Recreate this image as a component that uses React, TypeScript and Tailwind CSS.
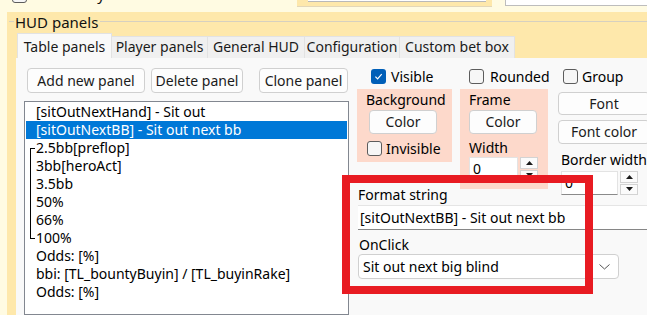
import React from "react";

const CheckBox = ({ checked = false }: { checked?: boolean }) => {
    if (checked) {
        return (
            <span className="w-[15px] h-[15px] rounded-[3px] bg-[#005fb8] flex items-center justify-center shrink-0">
                <svg width="11" height="11" viewBox="0 0 11 11">
                    <path d="M2.4 5.7 L4.6 7.9 L8.7 3.2" fill="none" stroke="#ffffff" strokeWidth="1.2" />
                </svg>
            </span>
        );
    }
    return <span className="w-[15px] h-[15px] rounded-[3px] border border-[#5c5c5c] bg-[#f6f6f6] shrink-0" />;
};

const Btn = ({ children, className = "" }: { children: React.ReactNode; className?: string }) => (
    <div className={"bg-[#fdfdfd] border border-[#d0d0d0] rounded-[4px] flex items-center justify-center text-[14px] text-[#1b1b1b] shrink-0 " + className}>
        {children}
    </div>
);

const Spin = ({ inputW }: { inputW: string }) => (
    <div className="flex gap-[2px] h-[24px]">
        <div className={inputW + " bg-white border border-[#e3e3e3] border-b-[#8a8a8a] text-[14px] leading-[22px] pl-[3px]"}>0</div>
        <div className="w-[18px] flex flex-col gap-[1px]">
            <div className="flex-1 bg-[#fbfbfb] border border-[#d3d3d3] flex items-center justify-center">
                <svg width="7" height="4" viewBox="0 0 7 4"><path d="M0 4 L3.5 0 L7 4 Z" fill="#1a1a1a" /></svg>
            </div>
            <div className="flex-1 bg-[#fbfbfb] border border-[#d3d3d3] flex items-center justify-center">
                <svg width="7" height="4" viewBox="0 0 7 4"><path d="M0 0 L3.5 4 L7 0 Z" fill="#1a1a1a" /></svg>
            </div>
        </div>
    </div>
);

const tabs = ["Player panels", "General HUD", "Configuration", "Custom bet box"];
const tabW = ["w-[96px]", "w-[97px]", "w-[95px]", "w-[115px]"];

const App = () => {
    return (
        <div className="w-[647px] h-[315px] overflow-hidden bg-[#fffbe2] font-['Noto_Sans',sans-serif] text-[#111] relative">
            {/* cut off row above */}
            <div className="h-[12px] flex items-start overflow-hidden">
                <div className="w-[297px] flex items-start">
                    <span className="ml-[12px] mt-[-12px] w-[15px] h-[15px] rounded-[3px] border border-[#5c5c5c] bg-[#f6f6f6]" />
                    <span className="ml-[4px] mt-[-15px] text-[15px] leading-[18px]">OnClick by mouse down</span>
                </div>
                <div className="w-[195px] h-[7px] bg-[#fee8ab] border-b border-[#e3d7b8] pl-[11px] pr-[6px]">
                    <div className="h-[2px] bg-white border-b border-[#b9b9b9]" />
                </div>
                <div className="ml-[13px] flex-1 h-[6px] bg-white border-l border-b border-[#bdbdbd]" />
            </div>

            {/* HUD panels group */}
            <div className="ml-[7px] h-[303px] bg-[#fee8ab] flex flex-col">
                <div className="h-[21px] flex items-start shrink-0">
                    <div className="ml-[2px] w-[5px] mt-[9px] border-t border-[#d6d0c0]" />
                    <div className="pl-[1px] pr-[2px] mt-[1px] text-[15px] leading-[18px]">HUD panels</div>
                    <div className="flex-1 mt-[9px] border-t border-[#d6d0c0]" />
                </div>

                <div className="ml-[10px] h-[25px] flex items-end shrink-0 text-[14px] text-[#1a1a1a]">
                    <div className="w-[95px] h-[25px] bg-[#f9f9f9] border border-b-0 border-[#e2e2e2] pt-[4px] text-center leading-[18px]">Table panels</div>
                    {tabs.map((t, i) => (
                        <div key={t} className={tabW[i] + " h-[22px] bg-[#f0f0f0] border border-l-0 border-b-0 border-[#e2e2e2] text-center leading-[20px]"}>{t}</div>
                    ))}
                </div>

                <div className="ml-[9px] flex-1 bg-[#f9f9f9] flex">
                    {/* left column */}
                    <div className="pl-[8px] w-[333px] flex flex-col shrink-0">
                        <div className="mt-[10px] pl-[3px] flex">
                            <Btn className="w-[118px] h-[25px]">Add new panel</Btn>
                            <Btn className="ml-[6px] w-[92px] h-[25px]">Delete panel</Btn>
                            <Btn className="ml-[16px] w-[89px] h-[25px]">Clone panel</Btn>
                        </div>
                        <div className="mt-[8px] w-[325px] flex-1 bg-white border border-[#828790] pt-[1px] px-[1px] text-[14px] leading-[18px] text-black">
                            <div className="pl-[10px]">[sitOutNextHand] - Sit out</div>
                            <div className="pl-[10px] bg-[#0078d7] text-white">[sitOutNextBB] - Sit out next bb</div>
                            <div className="relative">
                                <span className="absolute left-[4px] top-[9px] bottom-[8px] w-[5px] border-l border-t border-b border-black" />
                                <div className="pl-[10px]">2.5bb[preflop]</div>
                                <div className="pl-[10px]">3bb[heroAct]</div>
                                <div className="pl-[10px]">3.5bb</div>
                                <div className="pl-[10px]">50%</div>
                                <div className="pl-[10px]">66%</div>
                                <div className="pl-[10px]">100%</div>
                            </div>
                            <div className="pl-[10px]">Odds: [%]</div>
                            <div className="pl-[10px]">bbi: [TL_bountyBuyin] / [TL_buyinRake]</div>
                            <div className="pl-[10px]">Odds: [%]</div>
                        </div>
                    </div>

                    {/* right side */}
                    <div className="ml-[8px] flex-1 flex flex-col text-[14px] text-black">
                        <div className="mt-[11px] h-[15px] flex items-center">
                            <div className="w-[106px] pl-[14px] flex items-center gap-[5px] leading-[15px]"><CheckBox checked />Visible</div>
                            <div className="w-[100px] pl-[6px] flex items-center gap-[6px] leading-[15px]"><CheckBox />Rounded</div>
                            <div className="flex items-center gap-[4px] leading-[15px]"><CheckBox />Group</div>
                        </div>

                        <div className="mt-[5px] flex items-start">
                            <div className="w-[95px] shrink-0">
                                <div className="h-[73px] bg-[#fdd9cb] pl-[9px] pt-[2px] leading-[18px]">
                                    <div>Background</div>
                                    <Btn className="mt-[1px] ml-[3px] w-[68px] h-[24px]">Color</Btn>
                                    <div className="mt-[7px] ml-[1px] flex items-center gap-[4px] leading-[15px]"><CheckBox />Invisible</div>
                                </div>
                                <div className="mt-[24px] pl-[1px] leading-[18px]">Format string</div>
                            </div>
                            <div className="ml-[8px] w-[88px] h-[100px] shrink-0 bg-[#fdd9cb] pl-[9px] pt-[2px] leading-[18px]">
                                <div>Frame</div>
                                <Btn className="mt-[1px] w-[68px] h-[24px]">Color</Btn>
                                <div className="mt-[5px]">Width</div>
                                <Spin inputW="w-[49px]" />
                            </div>
                            <div className="ml-[10px] w-[92px] shrink-0 leading-[18px]">
                                <Btn className="mt-[3px] w-[92px] h-[23px]">Font</Btn>
                                <Btn className="mt-[5px] w-[92px] h-[24px]">Font color</Btn>
                                <div className="mt-[7px] pl-[3px] whitespace-nowrap">Border width</div>
                                <div className="mt-[2px] ml-[3px]"><Spin inputW="w-[57px]" /></div>
                            </div>
                        </div>

                        <div className="mt-[1px] ml-[1px] h-[25px] w-[320px] bg-white border-t border-[#e5e5e5] border-b border-b-[#868686] pl-[2px] leading-[23px]">
                            [sitOutNextBB] - Sit out next bb
                        </div>
                        <div className="mt-[6px] pl-[2px] leading-[18px]">OnClick</div>
                        <div className="ml-[1px] w-[261px] h-[25px] bg-white border border-[#d0d0d0] rounded-[4px] pl-[4px] pr-[8px] flex items-center justify-between">
                            <span>Sit out next big blind</span>
                            <svg width="11" height="6" viewBox="0 0 11 6">
                                <path d="M0.5 0.5 L5.5 5 L10.5 0.5" fill="none" stroke="#555" strokeWidth="1" />
                            </svg>
                        </div>
                    </div>
                </div>
            </div>

            {/* red annotation frame */}
            <div className="absolute left-[342px] top-[175px] w-[251px] h-[119px] border-[8px] border-[#e81b22]" />
        </div>
    );
};

export default App;
